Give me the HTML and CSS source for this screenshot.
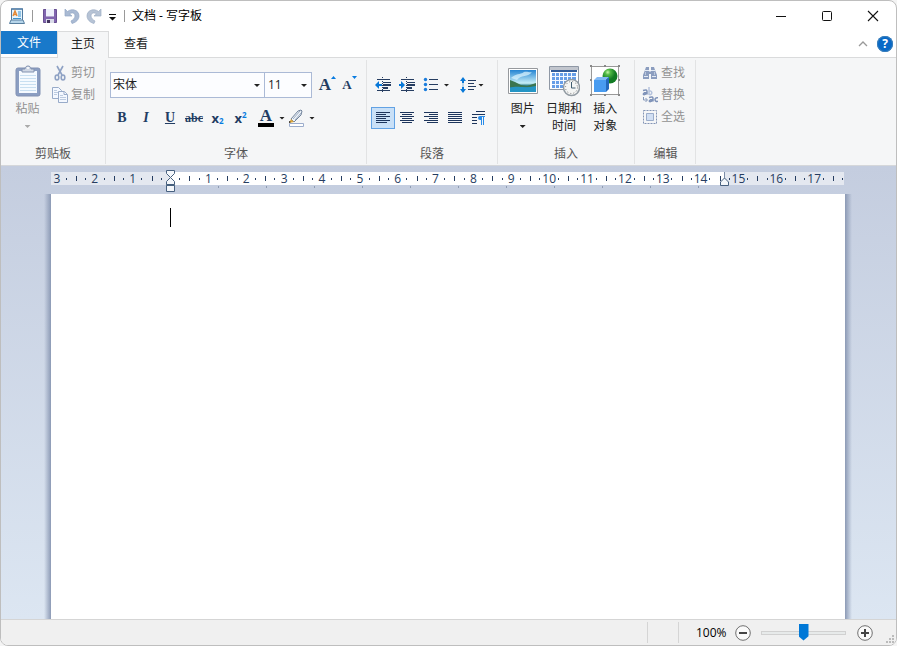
FILE: index.html
```html
<!DOCTYPE html>
<html lang="zh-CN">
<head>
<meta charset="utf-8">
<title>文档 - 写字板</title>
<link rel="stylesheet" href="styles.css">
</head>
<body>
<div class="window">
  <header class="titlebar">
    <svg class="app-icon" width="16" height="18" viewBox="0 0 16 18"><path d="M2.500 1.500h11v12h-11z" fill="#e6f4fc" stroke="#50799f"/><path d="M3 1h10v2H3z" fill="#6a91b6"/><path d="M4 9l2-5 2 5M5 7.500h2" stroke="#e58731" fill="none" stroke-width="1.400"/><path d="M9 5h3M9 7h3M9 9h3M4 11.500h8" stroke="#3b91cc"/><path d="M2 13h12l1.500 3.500H.5z" fill="#b6d5ea" stroke="#587f9f"/></svg>
    <i class="bar"></i>
    <button class="quick" aria-label="保存"><svg width="16" height="16" viewBox="0 0 16 16"><path d="M1.500 1.500h13v13h-13z" fill="#8065ae" stroke="#695092"/><path d="M4 1h8v7H4z" fill="#eef0fb"/><path d="M4 8h8v1H4z" fill="#b1a3cf"/><path d="M4 11h8v4H4z" fill="#d9dbe8"/><path d="M5 12h3v3H5z" fill="#43345f"/></svg></button>
    <button class="quick" aria-label="撤消"><svg width="16" height="16" viewBox="0 0 16 16"><path d="M1 1v7h7L5.500 5.800C8.500 4 11 5 11 8c0 2-2 4-4 5l1 2.500c4-1 7-4 7-7.500 0-6-7-8-11.500-4.500z" fill="#a9bad3" stroke="#94a8c6" stroke-width=".7"/></svg></button>
    <button class="quick" aria-label="重做"><svg width="16" height="16" viewBox="0 0 16 16"><path d="M15 1v7H8l2.500-2.200C7.500 4 5 5 5 8c0 2 2 4 4 5l-1 2.500C4 14.500 1 11.500 1 8c0-6 7-8 11.500-4.500z" fill="#b6c3d5" stroke="#9fafc5" stroke-width=".7"/></svg></button>
    <button class="quick more" aria-label="自定义"><svg width="7" height="7" viewBox="0 0 7 7"><path d="M0 0h7v1H0zM0 3h7L3.500 6.500z" fill="#111"/></svg></button>
    <i class="bar"></i>
    <h1>文档 - 写字板</h1>
    <div class="controls">
      <button aria-label="最小化"><svg width="12" height="12"><path d="M1 6.500h10" stroke="#111"/></svg></button>
      <button aria-label="最大化"><svg width="12" height="12"><rect x="1.500" y="1.500" width="9" height="9" rx="1" fill="none" stroke="#111"/></svg></button>
      <button aria-label="关闭"><svg width="12" height="12"><path d="M1 1l10 10M11 1L1 11" stroke="#111" stroke-width="1.100"/></svg></button>
    </div>
  </header>

  <nav class="tabs">
    <button class="tab file">文件</button>
    <button class="tab current">主页</button>
    <button class="tab">查看</button>
    <div class="tab-end">
      <button aria-label="折叠功能区"><svg width="10" height="6"><path d="M1 5l4-4 4 4" fill="none" stroke="#999" stroke-width="1.300"/></svg></button>
      <button class="help" aria-label="帮助">?</button>
    </div>
  </nav>

  <main class="ribbon">
    <section class="group clipboard">
      <div class="body">
        <button class="large" disabled>
          <svg width="26" height="32" viewBox="0 0 26 32"><rect x="1" y="3" width="24" height="28" rx="2" fill="#8b9ec2" stroke="#8191b3"/><path d="M4 6h18v22H4z" fill="#f5faff"/><path d="M5 10.500h16M5 13.500h16M5 16.500h16M5 19.500h16M5 22.500h16M5 25.500h16" stroke="#c8dff1"/><path d="M7 7V4h3c0-4 6-4 6 0h3v3z" fill="#d0d8e5" stroke="#8292b0"/><circle cx="13" cy="3" r="1" fill="#fff"/></svg>
          <span>粘贴</span><i class="arrow"></i>
        </button>
        <div class="stack">
          <button disabled><svg width="16" height="16" viewBox="0 0 16 16"><g fill="none" stroke="#8fa2c4" stroke-width="1.600"><path d="M5 1l5 9M11 1L6 10"/><ellipse cx="5" cy="12.500" rx="1.800" ry="2.500"/><ellipse cx="11" cy="12.500" rx="1.800" ry="2.500"/></g></svg>剪切</button>
          <button disabled><svg width="16" height="16" viewBox="0 0 16 16"><g fill="#f4f8ff" stroke="#98abc9"><path d="M.5.5h6l3 3v8h-9z"/><path d="M2 3.500h3M2 5.500h4M2 7.500h3" stroke="#bccbe0"/><path d="M6.500 4.500h6l3 3v8h-9z"/><path d="M12 4.500v3h3"/><path d="M8 8.500h3M8 10.500h6M8 12.500h6" stroke="#bccbe0"/></g></svg>复制</button>
        </div>
      </div>
      <h2>剪贴板</h2>
    </section>

    <section class="group font">
      <div class="body rows">
        <div class="row combos">
          <label class="combo family"><select aria-label="字体"><option>宋体</option></select></label>
          <label class="combo size"><select aria-label="字号"><option>11</option></select></label>
          <button class="tool glyph grow" aria-label="增大字体"><b>A</b><svg width="6" height="4"><path d="M0 3l2.500-3L5 3z" fill="#087be0"/></svg></button>
          <button class="tool glyph shrink" aria-label="缩小字体"><b>A</b><svg width="6" height="4"><path d="M0 0h5L2.500 3z" fill="#087be0"/></svg></button>
        </div>
        <div class="row marks">
          <button class="tool glyph"><b>B</b></button>
          <button class="tool glyph"><b><em>I</em></b></button>
          <button class="tool glyph"><b><u>U</u></b></button>
          <button class="tool glyph strike"><s>abc</s></button>
          <button class="tool glyph script"><b>x</b><sub>2</sub></button>
          <button class="tool glyph script"><b>x</b><sup>2</sup></button>
          <button class="tool split color" aria-label="文本颜色"><span><b>A</b></span><i class="arrow"></i></button>
          <button class="tool split pen" aria-label="突出显示"><svg width="17" height="18" viewBox="0 0 17 18"><path d="M3 10l7-8 3-1 1 1-1 4-7 7z" fill="#edf3fa" stroke="#71839b"/><path d="M5 10l7-8M7 11l6-7" stroke="#9eacbf"/><path d="M3 10l3 3-5 1z" fill="#dfa83d"/><path d="M1 12l2 1-2 1z" fill="#222"/><path d="M1.500 14.500h14v3h-14z" fill="#fff" stroke="#9cadcc"/></svg><i class="arrow"></i></button>
        </div>
      </div>
      <h2>字体</h2>
    </section>

    <section class="group paragraph">
      <div class="body rows">
        <div class="row">
          <button class="tool" aria-label="减少缩进"><svg width="16" height="16" viewBox="0 0 16 16"><path d="M2 2.500h13M8 5.500h8M2 13.500h13" stroke="#263d61"/><path d="M8 7h8v2H8zM8 10h5v2H8z" fill="#263d61"/><path d="M7.500 0v16" stroke="#263d61" stroke-dasharray="1 1"/><path d="M0 8l4-4v3h3v2H4v3z" fill="#0878d8"/></svg></button>
          <button class="tool" aria-label="增加缩进"><svg width="16" height="16" viewBox="0 0 16 16"><path d="M2 2.500h13M8 5.500h8M2 13.500h13" stroke="#263d61"/><path d="M8 7h8v2H8zM8 10h5v2H8z" fill="#263d61"/><path d="M7.500 0v16" stroke="#263d61" stroke-dasharray="1 1"/><path d="M6 8L2 4v3H0v2h2v3z" fill="#0878d8"/></svg></button>
          <button class="tool split" aria-label="项目符号"><svg width="16" height="16" viewBox="0 0 16 16"><g fill="#1b7ddd"><circle cx="2.500" cy="2.500" r="1.700"/><circle cx="2.500" cy="7.500" r="1.700"/><circle cx="2.500" cy="12.500" r="1.700"/></g><path d="M6 2.500h9M6 7.500h9M6 12.500h9" stroke="#263d61"/></svg><i class="arrow"></i></button>
          <button class="tool split spacing" aria-label="行距"><svg width="16" height="16" viewBox="0 0 16 16"><path d="M0 4l3-4 3 4H4v8h2l-3 4-3-4h2V4z" fill="#0878d8"/><path d="M2 6h2v4H2z" fill="#b8d8ee"/><path d="M8 3.500h8M8 6.500h6M8 9.500h8M8 12.500h6" stroke="#263d61"/></svg><i class="arrow"></i></button>
        </div>
        <div class="row">
          <button class="tool active" aria-label="左对齐"><svg width="14" height="12"><path d="M0 .5h14M0 2.500h10M0 4.500h14M0 6.500h10M0 8.500h14M0 10.500h11" stroke="#1d355c"/></svg></button>
          <button class="tool" aria-label="居中"><svg width="14" height="12"><path d="M0 .5h14M2 2.500h10M0 4.500h14M2 6.500h10M0 8.500h14M2 10.500h10" stroke="#1d355c"/></svg></button>
          <button class="tool" aria-label="右对齐"><svg width="14" height="12"><path d="M0 .5h14M5 2.500h9M0 4.500h14M5 6.500h9M0 8.500h14M3 10.500h11" stroke="#1d355c"/></svg></button>
          <button class="tool" aria-label="两端对齐"><svg width="14" height="12"><path d="M0 .5h14M0 2.500h14M0 4.500h14M0 6.500h14M0 8.500h14M0 10.500h14" stroke="#1d355c"/></svg></button>
          <button class="tool" aria-label="段落"><svg width="14" height="14"><path d="M4 .5h9M0 3.500h13M0 6.500h5M0 9.500h5M0 12.500h5" stroke="#1d355c"/><path d="M13 5H8a2 2 0 0 0 0 4h1v5h1V6h1v8h1V6h1z" fill="#278be9"/></svg></button>
        </div>
      </div>
      <h2>段落</h2>
    </section>

    <section class="group insert">
      <div class="body">
        <button class="large">
          <svg width="32" height="32" viewBox="0 0 32 32"><defs><linearGradient id="sky" x2="0" y2="1"><stop stop-color="#2584d2"/><stop offset=".6" stop-color="#c5eef8"/><stop offset=".7" stop-color="#388690"/><stop offset="1" stop-color="#276f94"/></linearGradient></defs><path d="M1.500 3.500h29v25h-29z" fill="#fff" stroke="#96999d"/><path d="M3 5h26v22H3z" fill="url(#sky)"/><path d="M4 13c5-5 9-3 13-6 3-1 6 1 8 0-3 5-12 3-15 8z" fill="#dff6ff" opacity=".7"/><path d="M3 15l5 2 6 3 6 1 9-3v4H3z" fill="#3a7550"/><path d="M3 23c8-3 12 1 26-2v6H3z" fill="#2495c5"/></svg>
          <span>图片</span><i class="arrow"></i>
        </button>
        <button class="large">
          <svg width="32" height="32" viewBox="0 0 32 32"><path d="M1.500 1.500h29v23h-29z" fill="#fff" stroke="#8f98a5"/><path d="M2 2h28v3H2z" fill="#c2c6ce"/><path d="M3 5h26v2H3z" fill="#315c9a"/><path d="M4 8h24v15H4z" fill="#679ee7"/><path d="M4 11.500h24M4 15.500h24M4 19.500h24M7.500 8v15M11.500 8v15M15.500 8v15M19.500 8v15M23.500 8v15" stroke="#f5f9ff"/><circle cx="23.500" cy="22.500" r="8" fill="#f4f5f4" stroke="#929ba2" stroke-width="1.500"/><circle cx="23.500" cy="22.500" r="6" fill="none" stroke="#777" stroke-dasharray="1 2.140"/><path d="M23.500 17v6h4" fill="none" stroke="#415d70"/></svg>
          <span>日期和<br>时间</span>
        </button>
        <button class="large">
          <svg width="32" height="32" viewBox="0 0 32 32"><defs><radialGradient id="ball" cx=".35" cy=".25"><stop stop-color="#c7f7a9"/><stop offset=".35" stop-color="#52ba45"/><stop offset="1" stop-color="#127b24"/></radialGradient></defs><path d="M2.500 1.500h27v28h-27z" fill="#fff" stroke="#999"/><g fill="#888"><path d="M1 0h2v2H1zM29 0h2v2h-2zM1 29h2v2H1zM29 29h2v2h-2zM15 0h2v2h-2zM15 29h2v2h-2zM1 14h2v2H1zM29 14h2v2h-2z"/></g><circle cx="21" cy="11" r="7.500" fill="url(#ball)"/><path d="M5 15l3-3h12l-3 3z" fill="#81b9f5"/><path d="M5 15h12v12H5z" fill="#499cf0"/><path d="M17 15l3-3v12l-3 3z" fill="#246abd"/></svg>
          <span>插入<br>对象</span>
        </button>
      </div>
      <h2>插入</h2>
    </section>

    <section class="group edit">
      <div class="body stack">
        <button disabled><svg width="16" height="16" viewBox="0 0 16 16"><g fill="#8b9dbf"><path d="M4 2h3v4l1 1v2H7v5H1v-4l2-5zM12 2H9v4L8 7v2h1v5h6v-4l-2-5z"/></g><path d="M3 5.500h4M9 5.500h4M2 11.500h4M10 11.500h4" stroke="#e4ebf5"/><path d="M3.500 7v3M12.500 7v3" stroke="#bac7dc"/></svg>查找</button>
        <button disabled><svg width="16" height="16" viewBox="0 0 16 16"><g fill="none" stroke-width="1.500"><g stroke="#7e92b8"><path d="M1 3.500c3-1 4-.5 4 1v3M5 5.500C1 5.300.5 8 2.500 7.600L5 6.500"/><path d="M7 10.500c3-1 4-.5 4 1v3M11 12.500c-4-.2-4.500 2.500-2.500 2.100L11 13.500M16 10.800c-4-1-4 4.500 0 3.500"/></g><path d="M7 0v8M7 4.500c3-2 4 3 1 3.200L7 7" stroke="#b4c2dc"/></g><path d="M1.500 10v3H5M3.500 11l2 2-2 2" fill="none" stroke="#8598ba"/></svg>替换</button>
        <button disabled><svg width="16" height="16" viewBox="0 0 16 16"><path d="M1.500 1.500h13v13h-13z" fill="none" stroke="#8294b5" stroke-dasharray="2 1"/><path d="M4.500 4.500h7v7h-7z" fill="#d1dff3" stroke="#9badcb"/></svg>全选</button>
      </div>
      <h2>编辑</h2>
    </section>
  </main>

  <div class="workspace">
    <div class="ruler">
      <div class="scale"><span>3</span><span>2</span><span>1</span><span></span><span>1</span><span>2</span><span>3</span><span>4</span><span>5</span><span>6</span><span>7</span><span>8</span><span>9</span><span>10</span><span>11</span><span>12</span><span>13</span><span>14</span><span>15</span><span>16</span><span>17</span><span></span></div>
      <div class="stops"></div>
      <svg class="marker indent" width="9" height="22" viewBox="0 0 9 22"><g fill="#f4f7fb" stroke="#47607f"><path d="M.5.500h8v3l-4 4-4-4z"/><path d="M4.500 7.500l4 4v3h-8v-3z"/><path d="M.5 15.500h8v6h-8z"/></g><path d="M0 15h9" stroke="#47607f"/></svg>
      <svg class="marker margin" width="9" height="14" viewBox="0 0 9 14"><path d="M4.500 0v6" stroke="#7c8da7"/><path d="M4.500 6l4 4v3.500h-8V10z" fill="#f4f7fb" stroke="#47607f"/></svg>
    </div>
    <div class="paper"><textarea aria-label="文档" spellcheck="false"></textarea><i class="caret"></i></div>
  </div>

  <footer class="status">
    <i class="cell"></i>
    <div class="zoom">
      <label for="zoom">100%</label>
      <button aria-label="缩小"><svg width="16" height="16"><circle cx="8" cy="8" r="7.300" fill="#fafafa" stroke="#707070"/><path d="M4 8h8" stroke="#444" stroke-width="2"/></svg></button>
      <input id="zoom" type="range" min="0" max="100" value="50">
      <button aria-label="放大"><svg width="16" height="16"><circle cx="8" cy="8" r="7.300" fill="#fafafa" stroke="#707070"/><path d="M4 8h8M8 4v8" stroke="#444" stroke-width="2"/></svg></button>
    </div>
    <svg class="grip" width="10" height="10"><path d="M6 0h2v2H6zM3 3h2v2H3zM6 3h2v2H6zM0 6h2v2H0zM3 6h2v2H3zM6 6h2v2H6z" fill="#bbb"/></svg>
  </footer>
</div>
</body>
</html>
```
FILE: styles.css
```css
* { box-sizing: border-box; }
body {
  margin: 0;
  background: #f4f4f4;
  color: #222;
  font: 12px/18px "Open Sans", "Noto Sans CJK SC", sans-serif;
}
button, select, input, textarea { font: inherit; color: inherit; margin: 0; padding: 0; border: 0; background: none; }
h1, h2 { margin: 0; font-size: 12px; font-weight: 400; }
svg { display: block; flex: none; }

.window {
  display: flex;
  flex-direction: column;
  height: 100vh;
  border: 1px solid #bebebe;
  border-radius: 8px;
  background: #fff;
  overflow: hidden;
}

/* Title bar */
.titlebar { display: flex; align-items: center; height: 30px; flex: none; padding-left: 8px; }
.bar { width: 1px; height: 12px; background: #999; margin: 0 9px 0 7px; }
.quick { width: 16px; height: 16px; margin-right: 6px; }
.quick.more { display: grid; place-items: center; width: 8px; margin: 2px 0 0; }
.quick.more + .bar { margin: 0 7px 0 8px; }
.titlebar h1 { color: #000; }
.controls { display: flex; margin-left: auto; }
.controls button { display: grid; place-items: center; width: 46px; height: 30px; }

/* Tabs */
.tabs { display: flex; height: 27px; flex: none; border-bottom: 1px solid #dadbdc; }
.tab { width: 52px; height: 27px; padding-bottom: 2px; margin-right: 1px; }
.tab.file { width: 56px; height: 23px; padding: 0; margin: 0; background: #1979ca; color: #fff; }
.tab.current { background: #f5f6f7; border: 1px solid #dadbdc; border-bottom: 0; }
.tab-end { display: flex; align-items: center; gap: 9px; margin-left: auto; padding-right: 3px; }
.help { width: 16px; height: 16px; border-radius: 50%; background: #0869c7; color: #fff; font-weight: 700; line-height: 16px; box-shadow: 0 0 0 1px #3c7fb9 inset; }

/* Ribbon */
.ribbon { display: flex; flex: none; height: 108px; padding: 2px 0 1px; background: #f5f6f7; border-bottom: 1px solid #d5d7da; }
.group { display: flex; flex-direction: column; padding: 0 4px; border-right: 1px solid #e2e3e4; }
.group h2 { text-align: center; line-height: 20px; color: #555; }
.body { display: flex; flex: 1; }
.rows { flex-direction: column; gap: 9px; padding-top: 12px; }
.row { display: flex; align-items: center; height: 26px; }
.row + .row { height: 22px; }
.large { display: flex; flex-direction: column; align-items: center; line-height: 17px; padding-top: 5px; }
.large span { margin-top: 3px; }
.large .arrow { margin-top: 8px; }
.stack { display: flex; flex-direction: column; padding-top: 2px; }
.stack button { display: flex; align-items: center; gap: 3px; height: 22px; }
button:disabled { color: #929292; }
.arrow { width: 6px; height: 3px; flex: none; background: #222; clip-path: polygon(0 0, 100% 0, 50% 100%); }
button:disabled .arrow { background: #aaa; }
.clipboard { width: 105px; }
.clipboard .large { width: 45px; }
.clipboard .stack { margin-left: 2px; }
.font { width: 261px; }
.combo { position: relative; height: 26px; border: 1px solid #abbad6; background: #fcfdff; }
.combo::after { content: ""; position: absolute; right: 4px; top: 11px; width: 6px; height: 3px; background: #222; clip-path: polygon(0 0, 100% 0, 50% 100%); pointer-events: none; }
.combo select { width: 100%; height: 24px; padding-left: 2px; appearance: none; }
.family { width: 155px; }
.size { width: 48px; margin-left: -1px; }
.size select { padding-left: 3px; }
.tool { display: flex; align-items: center; justify-content: center; width: 24px; height: 22px; flex: none; color: #233d63; }
.marks .script { width: 23px; }
.glyph { font-family: "Liberation Serif", serif; font-size: 14px; }
.grow { margin-left: 4px; font-size: 17px; }
.shrink { font-size: 13px; margin-left: -2px; }
.grow svg, .shrink svg { align-self: flex-start; margin-top: 2px; }
.strike { font-size: 12px; font-weight: 700; }
.script { font-family: "Open Sans", sans-serif; font-size: 13px; }
.script b { line-height: 18px; }
.script sub, .script sup { font-size: 8px; line-height: 8px; font-weight: 700; color: #087be0; }
.script sub { align-self: flex-end; margin-bottom: 4px; }
.script sup { align-self: flex-start; margin-top: 4px; }
.split { width: 33px; gap: 5px; }
.color { justify-content: flex-end; font-family: "Liberation Serif", serif; font-size: 17px; }
.color span { width: 16px; height: 18px; border-bottom: 4px solid #000; line-height: 14px; }
.pen { gap: 4px; }
.paragraph { width: 131px; }
.paragraph .tool { margin-right: 0; }
.paragraph .split { width: 34px; }
.paragraph .split.spacing { width: 38px; gap: 2px; }
.active { border: 1px solid #62a2e4; background: #c9e0f7; }
.insert { width: 137px; padding: 0 8px 0 4px; }
.insert .large { width: 42px; }
.insert h2 { padding-left: 4px; }
.edit { width: 61px; padding: 0 6px 0 7px; }

/* Ruler and document */
.workspace { display: flex; flex-direction: column; flex: 1; padding: 6px 51px 0 50px; background: linear-gradient(#c4cddf, #dce6f2); }
.ruler { position: relative; flex: none; height: 22px; margin-right: 1px; }
.scale {
  display: grid;
  grid-template-columns: repeat(22, minmax(0, 1fr));
  height: 13px;
  padding: 0;
  margin: 0 -27px 0 -13px;
  clip-path: inset(0 27px 0 13px);
  background: linear-gradient(#fff, #fff) 132px 0 / 554px 100% no-repeat #e4e8f0;
}
.scale span {
  display: flex;
  justify-content: center;
  line-height: 13px;
  color: #263d61;
  background:
    linear-gradient(#263d61, #263d61) 0 4px / 1px 5px no-repeat,
    linear-gradient(#263d61, #263d61) 25% 6px / 1px 2px no-repeat,
    linear-gradient(#263d61, #263d61) 75% 6px / 1px 2px no-repeat;
}
.stops { height: 2px; margin: 1px 145px 0 120px; background: repeating-linear-gradient(90deg, transparent 0 47px, #8e9bb2 47px 48px); }
.marker { position: absolute; }
.indent { left: 115px; top: -2px; }
.margin { left: 669px; top: 0; }
.paper { position: relative; flex: 1; display: flex; background: #fff; }
.paper::before, .paper::after { content: ""; position: absolute; top: 0; bottom: 0; width: 7px; }
.paper::before { right: 100%; background: linear-gradient(90deg, transparent, #8c9ab5); }
.paper::after { left: 100%; background: linear-gradient(270deg, transparent, #8c9ab5); }
.paper textarea { flex: 1; padding: 14px 120px; resize: none; outline: 0; }
.caret { position: absolute; left: 119px; top: 14px; width: 1px; height: 19px; background: #000; }

/* Status bar */
.status { display: flex; justify-content: flex-end; flex: none; position: relative; height: 26px; border-top: 1px solid #d5d5d5; background: #f0f0f0; color: #000; }
.cell { width: 32px; border: solid #d5d5d5; border-width: 0 1px; margin: 2px 0; }
.zoom { display: flex; align-items: center; padding: 0 23px 0 17px; }
.zoom label { width: 39px; }
.zoom button { width: 16px; height: 16px; }
.zoom input { width: 85px; height: 18px; margin: 0 11px 0 10px; appearance: none; }
.zoom input::-webkit-slider-runnable-track { height: 4px; border: 1px solid #d1d1d1; background: #e7eaea; }
.zoom input::-webkit-slider-thumb { appearance: none; width: 10px; height: 17px; margin-top: -8px; background: #0078d7; clip-path: polygon(0 0, 100% 0, 100% 75%, 50% 100%, 0 75%); }
.grip { position: absolute; right: 0; bottom: 0; }
```
